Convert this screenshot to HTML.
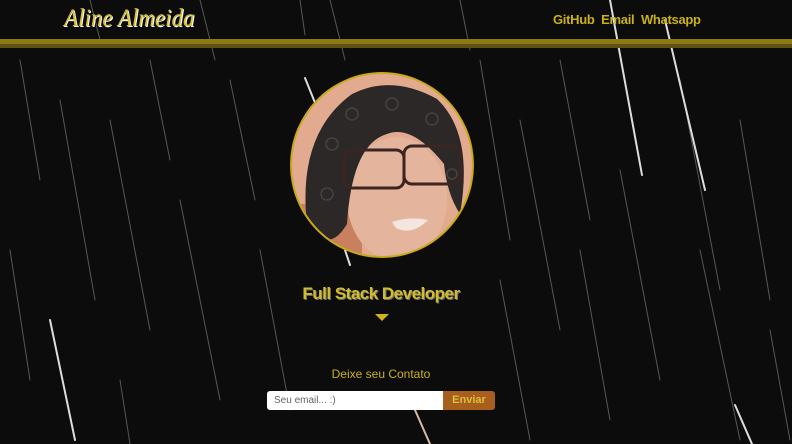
<!DOCTYPE html>
<html><head><meta charset="utf-8"><style>
html,body{margin:0;padding:0;width:792px;height:444px;overflow:hidden;background:#0c0c0c;font-family:"Liberation Sans",sans-serif}
#bg{position:absolute;left:0;top:0}
.logo{position:absolute;left:64px;top:5px;font-family:"Liberation Serif",serif;font-style:italic;font-size:25px;color:#d6c23a;text-shadow:1px 1px 0 #fff;transform:scaleX(0.92);transform-origin:left}
.nav{position:absolute;left:553px;top:12px;font-size:13px;font-weight:bold;color:#c9b11e;letter-spacing:-0.3px}
.bar1{position:absolute;left:0;top:39px;width:792px;height:5px;background:#8d7a16}
.bar2{position:absolute;left:0;top:44px;width:792px;height:4px;background:#5e5212}
.title{position:absolute;left:0;width:762px;top:284px;text-align:center;font-size:17px;font-weight:bold;color:#d2bc2c;text-shadow:1px 1px 0 #fff6;letter-spacing:-0.5px}
.tri{position:absolute;left:375px;top:314px;width:0;height:0;border-left:7px solid transparent;border-right:7px solid transparent;border-top:7px solid #d2b41a}
.dc{position:absolute;left:0;width:762px;top:367px;text-align:center;font-size:12px;color:#c9b11e}
.inp{position:absolute;left:267px;top:391px;width:176px;height:19px;background:#fff;border-radius:3px 0 0 3px;font-size:10px;color:#666;line-height:19px;padding-left:7px;box-sizing:border-box}
.btn{position:absolute;left:443px;top:391px;width:52px;height:19px;background:#a85f1e;border-radius:0 3px 3px 0;font-size:11px;font-weight:bold;color:#d9be3a;text-align:center;line-height:19px}
.photo{position:absolute;left:290px;top:72px;width:180px;height:182px;border-radius:50%;border:2px solid #c9a91a;overflow:hidden;background:#e2ab90}
</style></head><body>
<svg id="bg" width="792" height="444" stroke-linecap="round">
<g stroke="#777" stroke-width="1" opacity="0.7">
<line x1="20" y1="60" x2="40" y2="180"/><line x1="60" y1="100" x2="95" y2="300"/><line x1="110" y1="120" x2="150" y2="330"/><line x1="150" y1="60" x2="170" y2="160"/>
<line x1="180" y1="200" x2="220" y2="400"/><line x1="230" y1="80" x2="255" y2="200"/><line x1="260" y1="250" x2="290" y2="410"/><line x1="480" y1="60" x2="510" y2="240"/>
<line x1="520" y1="120" x2="560" y2="330"/><line x1="560" y1="60" x2="590" y2="220"/><line x1="500" y1="280" x2="530" y2="440"/><line x1="580" y1="250" x2="610" y2="420"/>
<line x1="620" y1="170" x2="660" y2="380"/><line x1="680" y1="80" x2="720" y2="290"/><line x1="700" y1="250" x2="740" y2="440"/><line x1="740" y1="120" x2="770" y2="300"/>
<line x1="10" y1="250" x2="30" y2="380"/><line x1="120" y1="380" x2="130" y2="444"/><line x1="330" y1="0" x2="345" y2="60"/><line x1="460" y1="0" x2="470" y2="50"/>
<line x1="300" y1="0" x2="305" y2="35"/><line x1="90" y1="0" x2="100" y2="40"/><line x1="200" y1="0" x2="215" y2="60"/><line x1="770" y1="330" x2="790" y2="440"/>
</g>
<g stroke="#ddd" stroke-width="2">
<line x1="610" y1="0" x2="642" y2="175"/><line x1="665" y1="20" x2="705" y2="190"/><line x1="50" y1="320" x2="75" y2="440"/><line x1="305" y1="78" x2="322" y2="120"/>
<line x1="735" y1="405" x2="752" y2="444"/><line x1="345" y1="250" x2="350" y2="265"/>
</g>
<line x1="415" y1="410" x2="430" y2="444" stroke="#d9b9a0" stroke-width="2"/>
</svg>
<div class="bar1"></div><div class="bar2"></div>
<div class="logo">Aline Almeida</div>
<div class="nav">GitHub&nbsp; Email&nbsp; Whatsapp</div>
<div class="photo">
<svg width="180" height="182" style="position:absolute;left:0;top:0">
<rect x="0" y="130" width="70" height="52" fill="#c9805e"/>
<ellipse cx="105" cy="125" rx="50" ry="62" fill="#e4b49c"/>
<path d="M15 150 Q5 60 60 20 Q100 0 145 25 Q182 60 168 140 Q155 120 152 90 Q120 50 95 60 Q60 70 55 150 Q40 175 25 160 Z" fill="#2c2828"/>
<g fill="none" stroke="#555" stroke-width="1.5" opacity="0.6"><circle cx="40" cy="70" r="6"/><circle cx="60" cy="40" r="6"/><circle cx="100" cy="30" r="6"/><circle cx="140" cy="45" r="6"/><circle cx="35" cy="120" r="6"/><circle cx="160" cy="100" r="5"/></g>
<rect x="52" y="76" width="60" height="38" rx="8" fill="none" stroke="#3a2520" stroke-width="3"/>
<rect x="112" y="72" width="56" height="38" rx="8" fill="none" stroke="#3a2520" stroke-width="3"/>
<path d="M100 148 Q118 142 136 146 Q120 162 104 154 Z" fill="#f2e6df"/>
</svg>
</div>
<div class="title">Full Stack Developer</div>
<div class="tri"></div>
<div class="dc">Deixe seu Contato</div>
<div class="inp">Seu email... :)</div>
<div class="btn">Enviar</div>
</body></html>
